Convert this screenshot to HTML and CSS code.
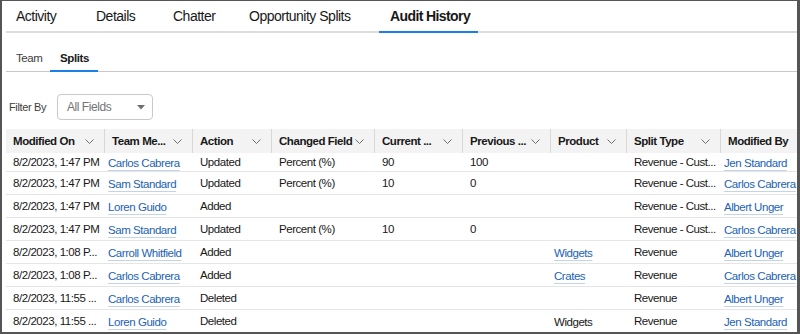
FILE: index.html
```html
<!DOCTYPE html>
<html lang="en">
<head>
<meta charset="utf-8">
<title>Audit History</title>
<link rel="stylesheet" href="styles.css">
</head>
<body>
<div class="frame">
  <nav class="tabs">
    <div class="tab t-activity">Activity</div>
    <div class="tab t-details">Details</div>
    <div class="tab t-chatter">Chatter</div>
    <div class="tab t-splits">Opportunity Splits</div>
    <div class="tab t-audit active">Audit History</div>
  </nav>
  <nav class="subtabs">
    <div class="subtab s-team">Team</div>
    <div class="subtab s-splits active">Splits</div>
  </nav>
  <div class="filter">
    <span class="filter-label">Filter By</span>
    <div class="select">
      <span class="select-value">All Fields</span>
      <svg class="caret" width="8" height="5" viewBox="0 0 8 5"><path d="M0 0 H8 L4 4.5 Z" fill="#706e6b"/></svg>
    </div>
  </div>
  <div class="grid">
    <div class="th"><span>Modified On</span><svg class="chev" width="9" height="5" viewBox="0 0 9 5"><path d="M0.5 0.5 L4.5 4.5 L8.5 0.5" fill="none" stroke="#706e6b" stroke-width="1"/></svg></div>
    <div class="th"><span>Team Me...</span><svg class="chev" width="9" height="5" viewBox="0 0 9 5"><path d="M0.5 0.5 L4.5 4.5 L8.5 0.5" fill="none" stroke="#706e6b" stroke-width="1"/></svg></div>
    <div class="th"><span>Action</span><svg class="chev" width="9" height="5" viewBox="0 0 9 5"><path d="M0.5 0.5 L4.5 4.5 L8.5 0.5" fill="none" stroke="#706e6b" stroke-width="1"/></svg></div>
    <div class="th"><span>Changed Field</span><svg class="chev" width="9" height="5" viewBox="0 0 9 5"><path d="M0.5 0.5 L4.5 4.5 L8.5 0.5" fill="none" stroke="#706e6b" stroke-width="1"/></svg></div>
    <div class="th"><span>Current ...</span><svg class="chev" width="9" height="5" viewBox="0 0 9 5"><path d="M0.5 0.5 L4.5 4.5 L8.5 0.5" fill="none" stroke="#706e6b" stroke-width="1"/></svg></div>
    <div class="th"><span>Previous ...</span><svg class="chev" width="9" height="5" viewBox="0 0 9 5"><path d="M0.5 0.5 L4.5 4.5 L8.5 0.5" fill="none" stroke="#706e6b" stroke-width="1"/></svg></div>
    <div class="th"><span>Product</span><svg class="chev" width="9" height="5" viewBox="0 0 9 5"><path d="M0.5 0.5 L4.5 4.5 L8.5 0.5" fill="none" stroke="#706e6b" stroke-width="1"/></svg></div>
    <div class="th"><span>Split Type</span><svg class="chev" width="9" height="5" viewBox="0 0 9 5"><path d="M0.5 0.5 L4.5 4.5 L8.5 0.5" fill="none" stroke="#706e6b" stroke-width="1"/></svg></div>
    <div class="th last"><span>Modified By</span></div>

    <div class="td first">8/2/2023, 1:47 PM</div>
    <div class="td first lk"><a href="#">Carlos Cabrera</a></div>
    <div class="td first">Updated</div>
    <div class="td first">Percent (%)</div>
    <div class="td first">90</div>
    <div class="td first">100</div>
    <div class="td first lk"></div>
    <div class="td first">Revenue - Cust...</div>
    <div class="td first lk"><a href="#">Jen Standard</a></div>

    <div class="td">8/2/2023, 1:47 PM</div>
    <div class="td lk"><a href="#">Sam Standard</a></div>
    <div class="td">Updated</div>
    <div class="td">Percent (%)</div>
    <div class="td">10</div>
    <div class="td">0</div>
    <div class="td lk"></div>
    <div class="td">Revenue - Cust...</div>
    <div class="td lk"><a href="#">Carlos Cabrera</a></div>

    <div class="td">8/2/2023, 1:47 PM</div>
    <div class="td lk"><a href="#">Loren Guido</a></div>
    <div class="td">Added</div>
    <div class="td"></div>
    <div class="td"></div>
    <div class="td"></div>
    <div class="td lk"></div>
    <div class="td">Revenue - Cust...</div>
    <div class="td lk"><a href="#">Albert Unger</a></div>

    <div class="td">8/2/2023, 1:47 PM</div>
    <div class="td lk"><a href="#">Sam Standard</a></div>
    <div class="td">Updated</div>
    <div class="td">Percent (%)</div>
    <div class="td">10</div>
    <div class="td">0</div>
    <div class="td lk"></div>
    <div class="td">Revenue - Cust...</div>
    <div class="td lk"><a href="#">Carlos Cabrera</a></div>

    <div class="td">8/2/2023, 1:08 P...</div>
    <div class="td lk"><a href="#">Carroll Whitfield</a></div>
    <div class="td">Added</div>
    <div class="td"></div>
    <div class="td"></div>
    <div class="td"></div>
    <div class="td lk"><a href="#">Widgets</a></div>
    <div class="td">Revenue</div>
    <div class="td lk"><a href="#">Albert Unger</a></div>

    <div class="td">8/2/2023, 1:08 P...</div>
    <div class="td lk"><a href="#">Carlos Cabrera</a></div>
    <div class="td">Added</div>
    <div class="td"></div>
    <div class="td"></div>
    <div class="td"></div>
    <div class="td lk"><a href="#">Crates</a></div>
    <div class="td">Revenue</div>
    <div class="td lk"><a href="#">Carlos Cabrera</a></div>

    <div class="td">8/2/2023, 11:55 ...</div>
    <div class="td lk"><a href="#">Carlos Cabrera</a></div>
    <div class="td">Deleted</div>
    <div class="td"></div>
    <div class="td"></div>
    <div class="td"></div>
    <div class="td lk"></div>
    <div class="td">Revenue</div>
    <div class="td lk"><a href="#">Albert Unger</a></div>

    <div class="td">8/2/2023, 11:55 ...</div>
    <div class="td lk"><a href="#">Loren Guido</a></div>
    <div class="td">Deleted</div>
    <div class="td"></div>
    <div class="td"></div>
    <div class="td"></div>
    <div class="td lk"><span class="plain">Widgets</span></div>
    <div class="td">Revenue</div>
    <div class="td lk"><a href="#">Jen Standard</a></div>
  </div>
</div>
</body>
</html>
```

FILE: styles.css
```css
* { box-sizing: border-box; }

html, body {
  margin: 0;
  padding: 0;
  background: #ffffff;
}

body {
  font-family: "Liberation Sans", Arial, sans-serif;
  color: #181818;
}

.frame {
  width: 800px;
  height: 334px;
  overflow: hidden;
  border-style: solid;
  border-color: #555555;
  border-width: 1px 3px 2px 2px;
  padding-left: 4px;
  background: #ffffff;
}

/* Top tabs */
.tabs {
  display: flex;
  height: 32px;
  border-bottom: 2px solid #dddddd;
}

.tab {
  height: 30px;
  line-height: 30px;
  font-size: 14px;
  letter-spacing: -0.5px;
  color: #181818;
  padding-left: 11px;
  white-space: nowrap;
}

.t-activity { width: 79px; padding-left: 10px; }
.t-details { width: 77px; }
.t-chatter { width: 76px; }
.t-splits { width: 141px; }
.t-audit { width: 99px; }

.tab.active {
  font-weight: bold;
  height: 32px;
  border-bottom: 2px solid #1b7fe8;
  margin-bottom: -2px;
  letter-spacing: -0.6px;
}

/* Sub tabs */
.subtabs {
  display: flex;
  height: 39px;
  border-bottom: 1px solid #c9c9c9;
}

.subtab {
  height: 38px;
  padding-top: 17px;
  line-height: 16px;
  font-size: 11.5px;
  letter-spacing: -0.4px;
  color: #3e3e3c;
  padding-left: 10px;
}

.s-team { width: 44px; }
.s-splits { width: 48px; }

.subtab.active {
  font-weight: bold;
  color: #181818;
  height: 39px;
  border-bottom: 2px solid #1b7fe8;
  margin-bottom: -1px;
}

/* Filter */
.filter {
  display: flex;
  align-items: center;
  height: 26px;
  margin-top: 22px;
  padding-left: 3px;
}

.filter-label {
  font-size: 11px;
  letter-spacing: -0.35px;
  color: #3e3e3c;
  width: 48px;
}

.select {
  width: 96px;
  height: 26px;
  border: 1px solid #c9c9c9;
  border-radius: 4px;
  display: flex;
  align-items: center;
  justify-content: space-between;
  padding: 0 7px 0 9px;
}

.select-value {
  font-size: 12px;
  letter-spacing: -0.45px;
  color: #747474;
}

.caret { display: block; margin-top: 1px; }

/* Table */
.grid {
  margin-top: 9px;
  display: grid;
  grid-template-columns: 99px 88px 79px 103px 88px 88px 76px 94px 76px;
  font-size: 11.5px;
  letter-spacing: -0.45px;
}

.th {
  height: 24px;
  background: #f3f3f3;
  border-right: 1px solid #d8d8d8;
  display: flex;
  align-items: center;
  justify-content: space-between;
  padding: 0 10px 0 7px;
  font-weight: bold;
  white-space: nowrap;
  overflow: hidden;
}

.th.last { border-right: none; }

.chev { display: block; flex: none; }

.td {
  height: 23px;
  border-bottom: 1px solid #e5e5e5;
  display: flex;
  align-items: center;
  padding-left: 7px;
  white-space: nowrap;
  overflow: hidden;
}

.td.first { height: 19px; }

.td.lk { padding-left: 3px; }

.td a {
  color: #1b62b5;
  text-decoration: underline;
  text-decoration-color: #c3d3e8;
  text-underline-offset: 3px;
  padding-top: 2px;
}

.plain { padding-top: 1px; }
```
